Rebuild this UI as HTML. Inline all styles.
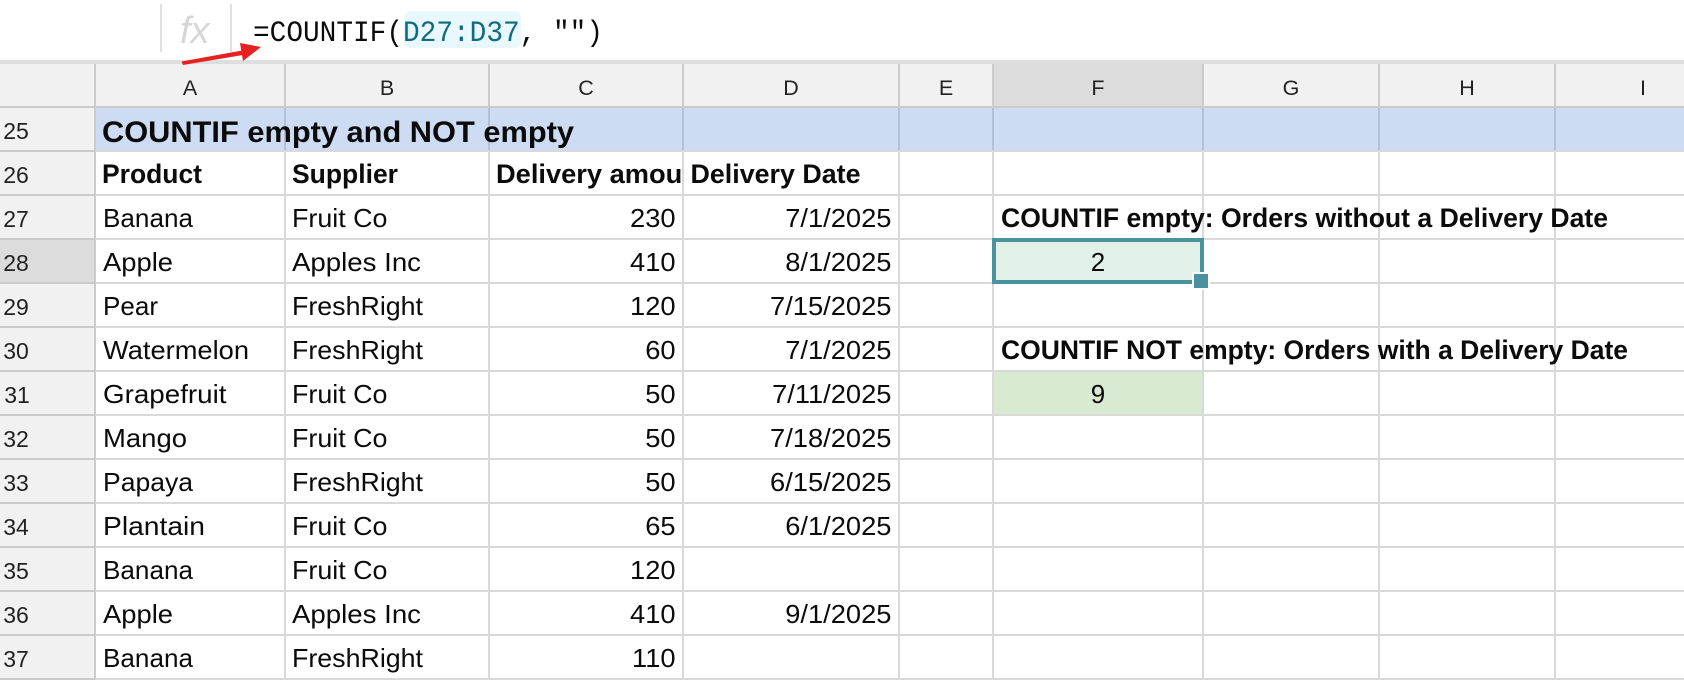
<!DOCTYPE html>
<html><head><meta charset="utf-8"><style>
html,body{margin:0;padding:0;background:#fff;width:1684px;height:680px;overflow:hidden}
svg{display:block}
text{font-family:"Liberation Sans",sans-serif;fill:#0b0b0b}
.c{font-size:26px}
.b{font-size:27px;font-weight:700}
.r{font-size:23px;text-anchor:middle;fill:#222}
.h{font-size:21.5px;text-anchor:middle;fill:#222}
.e{text-anchor:end}
.m{text-anchor:middle}
.f{font-family:"Liberation Mono",monospace;font-size:30px}
</style></head><body>
<svg width="1684" height="680" viewBox="0 0 1684 680" xmlns="http://www.w3.org/2000/svg">
<defs><clipPath id="cc"><rect x="490" y="150" width="192" height="44"/></clipPath></defs>
<rect width="1684" height="680" fill="#fff"/>
<!-- formula bar -->
<rect x="160" y="4" width="2" height="48" fill="#e0e0e0"/>
<rect x="230" y="4" width="2" height="48" fill="#e0e0e0"/>
<text x="180" y="43" style="font-style:italic;font-size:38px;fill:#d6d6d6">fx</text>
<rect x="404" y="11" width="117" height="37" rx="7" fill="#e8f8fd"/>
<text class="f" x="253" y="41" textLength="350" lengthAdjust="spacingAndGlyphs"><tspan>=COUNTIF(</tspan><tspan style="fill:#0e6b80">D27:D37</tspan><tspan>, "")</tspan></text>
<!-- headers -->
<rect x="0" y="60" width="1684" height="4" fill="#dedede"/>
<rect x="0" y="64" width="1684" height="42" fill="#f1f1f1"/>
<rect x="0" y="107" width="95" height="573" fill="#f1f1f1"/>
<rect x="994" y="64" width="208" height="42" fill="#dcdcdc"/>
<rect x="0" y="239" width="94" height="43" fill="#dcdcdc"/>
<!-- arrow -->
<path d="M181.5 61.5 L245 50 L245.8 54.5 L183 65 Z" fill="#e7211f"/>
<path d="M261 47 L240 43 L243 61 Z" fill="#e7211f"/>
<!-- row 25 band -->
<rect x="95" y="107" width="1589" height="43" fill="#cddcf3"/>
<!-- fills -->
<rect x="994" y="371" width="208" height="43" fill="#d9ead3"/>
<rect x="994" y="239" width="208" height="43" fill="#e2f1e7"/>
<!-- horizontal grid -->
<g fill="#d9d9d9">
<rect x="95" y="150" width="1589" height="2"/>
<rect x="95" y="194" width="1589" height="2"/>
<rect x="95" y="238" width="1589" height="2"/>
<rect x="95" y="282" width="1589" height="2"/>
<rect x="95" y="326" width="1589" height="2"/>
<rect x="95" y="370" width="1589" height="2"/>
<rect x="95" y="414" width="1589" height="2"/>
<rect x="95" y="458" width="1589" height="2"/>
<rect x="95" y="502" width="1589" height="2"/>
<rect x="95" y="546" width="1589" height="2"/>
<rect x="95" y="590" width="1589" height="2"/>
<rect x="95" y="634" width="1589" height="2"/>
<rect x="95" y="678" width="1589" height="2"/>
</g>
<g fill="#cbcbcb">
<rect x="0" y="106" width="1684" height="2"/>
<rect x="0" y="150" width="95" height="2"/>
<rect x="0" y="194" width="95" height="2"/>
<rect x="0" y="238" width="95" height="2"/>
<rect x="0" y="282" width="95" height="2"/>
<rect x="0" y="326" width="95" height="2"/>
<rect x="0" y="370" width="95" height="2"/>
<rect x="0" y="414" width="95" height="2"/>
<rect x="0" y="458" width="95" height="2"/>
<rect x="0" y="502" width="95" height="2"/>
<rect x="0" y="546" width="95" height="2"/>
<rect x="0" y="590" width="95" height="2"/>
<rect x="0" y="634" width="95" height="2"/>
<rect x="0" y="678" width="95" height="2"/>
</g>
<!-- vertical grid -->
<g fill="#d9d9d9">
<rect x="284" y="150" width="2" height="530"/>
<rect x="488" y="150" width="2" height="530"/>
<rect x="682" y="150" width="2" height="530"/>
<rect x="898" y="150" width="2" height="530"/>
<rect x="992" y="150" width="2" height="530"/>
<rect x="1202" y="150" width="2" height="530"/>
<rect x="1378" y="150" width="2" height="530"/>
<rect x="1554" y="150" width="2" height="530"/>
</g>
<g fill="#b3c0d6">
<rect x="284" y="108" width="2" height="42"/>
<rect x="488" y="108" width="2" height="42"/>
<rect x="682" y="108" width="2" height="42"/>
<rect x="898" y="108" width="2" height="42"/>
<rect x="992" y="108" width="2" height="42"/>
<rect x="1202" y="108" width="2" height="42"/>
<rect x="1378" y="108" width="2" height="42"/>
<rect x="1554" y="108" width="2" height="42"/>
</g>
<g fill="#cbcbcb">
<rect x="94" y="64" width="2" height="616"/>
<rect x="284" y="64" width="2" height="42"/>
<rect x="488" y="64" width="2" height="42"/>
<rect x="682" y="64" width="2" height="42"/>
<rect x="898" y="64" width="2" height="42"/>
<rect x="992" y="64" width="2" height="42"/>
<rect x="1202" y="64" width="2" height="42"/>
<rect x="1378" y="64" width="2" height="42"/>
<rect x="1554" y="64" width="2" height="42"/>
</g>
<!-- selection -->
<rect x="994" y="240" width="208" height="42" fill="none" stroke="#4a929f" stroke-width="4"/>
<rect x="1192" y="272" width="18" height="18" fill="#fff"/>
<rect x="1194" y="274" width="14" height="14" fill="#4a929f"/>
<!-- col header labels -->
<text class="h" x="190" y="95">A</text>
<text class="h" x="387" y="95">B</text>
<text class="h" x="586" y="95">C</text>
<text class="h" x="791" y="95">D</text>
<text class="h" x="946" y="95">E</text>
<text class="h" x="1098" y="95">F</text>
<text class="h" x="1291" y="95">G</text>
<text class="h" x="1467" y="95">H</text>
<text class="h" x="1643" y="95">I</text>
<!-- row labels -->
<text class="r" x="16" y="139">25</text>
<text class="r" x="16" y="183">26</text>
<text class="r" x="16" y="227">27</text>
<text class="r" x="16" y="271">28</text>
<text class="r" x="16" y="315">29</text>
<text class="r" x="16" y="359">30</text>
<text class="r" x="17" y="403">31</text>
<text class="r" x="16" y="447">32</text>
<text class="r" x="16" y="491">33</text>
<text class="r" x="16" y="535">34</text>
<text class="r" x="16" y="579">35</text>
<text class="r" x="16" y="623">36</text>
<text class="r" x="16" y="667">37</text>
<!-- title and bold labels -->
<text x="102" y="142" textLength="472" lengthAdjust="spacingAndGlyphs" style="font-size:30px;font-weight:700">COUNTIF empty and NOT empty</text>
<text class="b" x="102" y="183" textLength="100" lengthAdjust="spacingAndGlyphs">Product</text>
<text class="b" x="292" y="183" textLength="106" lengthAdjust="spacingAndGlyphs">Supplier</text>
<g clip-path="url(#cc)"><text class="b" x="496" y="183" textLength="212" lengthAdjust="spacingAndGlyphs">Delivery amount</text></g>
<text class="b" x="690.5" y="183" textLength="170" lengthAdjust="spacingAndGlyphs">Delivery Date</text>
<text class="b" x="1001" y="227" textLength="607" lengthAdjust="spacingAndGlyphs">COUNTIF empty: Orders without a Delivery Date</text>
<text class="b" x="1001" y="359" textLength="627" lengthAdjust="spacingAndGlyphs">COUNTIF NOT empty: Orders with a Delivery Date</text>
<text class="c m" x="1098" y="271">2</text>
<text class="c m" x="1098" y="403">9</text>
<!-- text columns -->
<text class="c" x="103" y="227" textLength="90" lengthAdjust="spacingAndGlyphs">Banana</text><text class="c" x="292" y="227" textLength="95.5" lengthAdjust="spacingAndGlyphs">Fruit Co</text>
<text class="c" x="103" y="271" textLength="70" lengthAdjust="spacingAndGlyphs">Apple</text><text class="c" x="292" y="271" textLength="129" lengthAdjust="spacingAndGlyphs">Apples Inc</text>
<text class="c" x="103" y="315" textLength="55" lengthAdjust="spacingAndGlyphs">Pear</text><text class="c" x="292" y="315" textLength="131" lengthAdjust="spacingAndGlyphs">FreshRight</text>
<text class="c" x="103" y="359" textLength="146" lengthAdjust="spacingAndGlyphs">Watermelon</text><text class="c" x="292" y="359" textLength="131" lengthAdjust="spacingAndGlyphs">FreshRight</text>
<text class="c" x="103" y="403" textLength="123.5" lengthAdjust="spacingAndGlyphs">Grapefruit</text><text class="c" x="292" y="403" textLength="95.5" lengthAdjust="spacingAndGlyphs">Fruit Co</text>
<text class="c" x="103" y="447" textLength="84" lengthAdjust="spacingAndGlyphs">Mango</text><text class="c" x="292" y="447" textLength="95.5" lengthAdjust="spacingAndGlyphs">Fruit Co</text>
<text class="c" x="103" y="491" textLength="90" lengthAdjust="spacingAndGlyphs">Papaya</text><text class="c" x="292" y="491" textLength="131" lengthAdjust="spacingAndGlyphs">FreshRight</text>
<text class="c" x="103" y="535" textLength="102" lengthAdjust="spacingAndGlyphs">Plantain</text><text class="c" x="292" y="535" textLength="95.5" lengthAdjust="spacingAndGlyphs">Fruit Co</text>
<text class="c" x="103" y="579" textLength="90" lengthAdjust="spacingAndGlyphs">Banana</text><text class="c" x="292" y="579" textLength="95.5" lengthAdjust="spacingAndGlyphs">Fruit Co</text>
<text class="c" x="103" y="623" textLength="70" lengthAdjust="spacingAndGlyphs">Apple</text><text class="c" x="292" y="623" textLength="129" lengthAdjust="spacingAndGlyphs">Apples Inc</text>
<text class="c" x="103" y="667" textLength="90" lengthAdjust="spacingAndGlyphs">Banana</text><text class="c" x="292" y="667" textLength="131" lengthAdjust="spacingAndGlyphs">FreshRight</text>
<!-- numeric columns -->
<g transform="scale(1.05,1)">
<text class="c e" x="643.4" y="227">230</text><text class="c e" x="849" y="227">7/1/2025</text>
<text class="c e" x="643.4" y="271">410</text><text class="c e" x="849" y="271">8/1/2025</text>
<text class="c e" x="643.4" y="315">120</text><text class="c e" x="849" y="315">7/15/2025</text>
<text class="c e" x="643.4" y="359">60</text><text class="c e" x="849" y="359">7/1/2025</text>
<text class="c e" x="643.4" y="403">50</text><text class="c e" x="849" y="403">7/11/2025</text>
<text class="c e" x="643.4" y="447">50</text><text class="c e" x="849" y="447">7/18/2025</text>
<text class="c e" x="643.4" y="491">50</text><text class="c e" x="849" y="491">6/15/2025</text>
<text class="c e" x="643.4" y="535">65</text><text class="c e" x="849" y="535">6/1/2025</text>
<text class="c e" x="643.4" y="579">120</text>
<text class="c e" x="643.4" y="623">410</text><text class="c e" x="849" y="623">9/1/2025</text>
<text class="c e" x="643.4" y="667">110</text>
</g>
</svg>
</body></html>
